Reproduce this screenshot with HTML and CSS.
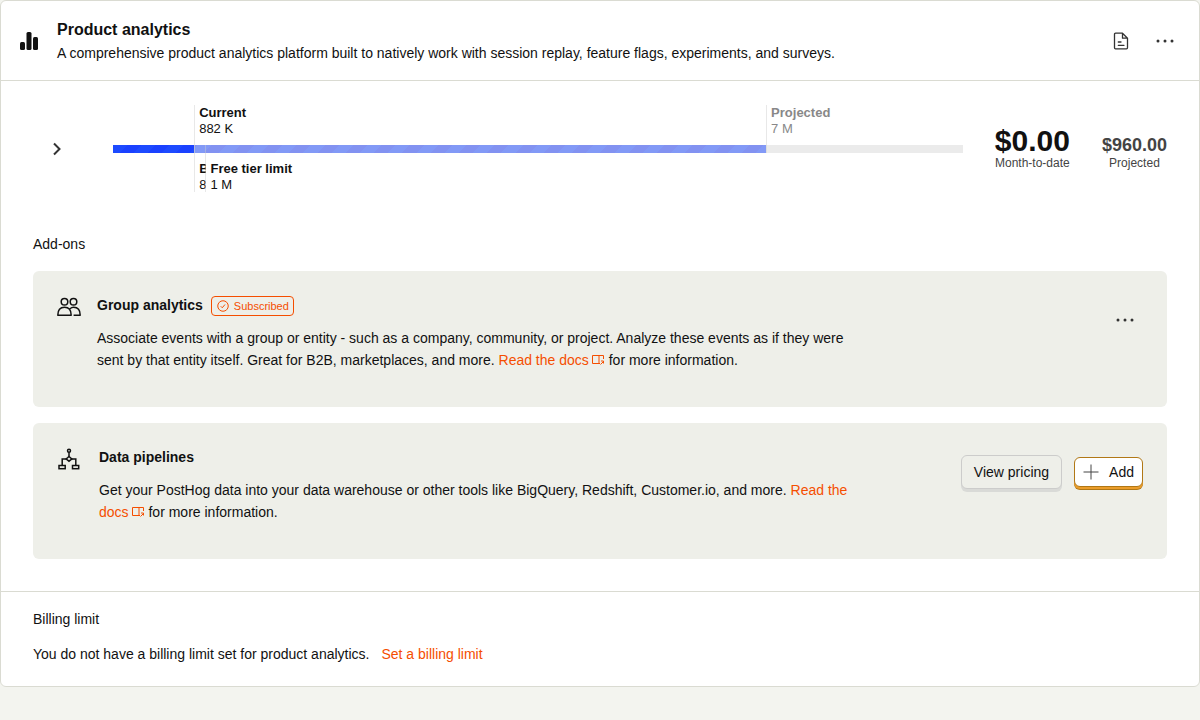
FILE: index.html
```html
<!DOCTYPE html>
<html lang="en">
<head>
<meta charset="utf-8">
<meta name="viewport" content="width=device-width, initial-scale=1">
<title>Product analytics billing</title>
<link rel="stylesheet" href="styles.css">
</head>
<body>
<main class="product">
  <header class="product-header">
    <svg class="product-icon" viewBox="0 0 24 24" aria-hidden="true">
      <rect x="3" y="13" width="5" height="8" rx="1.5"/><rect x="9.500" y="3" width="5" height="18" rx="1.5"/><rect x="16" y="8" width="5" height="13" rx="1.5"/>
    </svg>
    <div class="product-heading">
      <h1 class="product-title">Product analytics</h1>
      <p class="product-summary">A comprehensive product analytics platform built to natively work with session replay, feature flags, experiments, and surveys.</p>
    </div>
    <div class="header-actions">
      <a class="icon-button" href="#docs" aria-label="Read the docs">
        <svg class="icon" viewBox="0 0 20 20" fill="none" stroke="currentColor" stroke-width="1.3" stroke-linejoin="round" stroke-linecap="round"><path d="M11.500 2.200H4.500a1 1 0 0 0-1 1v13.600a1 1 0 0 0 1 1h11a1 1 0 0 0 1-1V7.200zM11.500 2.200v5h5M7.300 11h2.700M7.300 14.300h5.700"/></svg>
      </a>
      <button class="icon-button" type="button" aria-label="More options">
        <svg class="icon" viewBox="0 0 20 20" fill="currentColor"><circle cx="3" cy="10" r="1.5"/><circle cx="10" cy="10" r="1.5"/><circle cx="17" cy="10" r="1.5"/></svg>
      </button>
    </div>
  </header>

  <section class="product-body">
    <div class="usage">
      <button class="expand" type="button" aria-label="Show breakdown">
        <svg class="icon-large" viewBox="0 0 24 24" fill="none" stroke="currentColor" stroke-width="2"><path d="M9 6.500l5.500 5.500L9 17.500"/></svg>
      </button>
      <div class="gauge">
        <div class="gauge-fill gauge-projected" style="width: 76.850%"></div>
        <div class="gauge-fill gauge-current" style="width: 9.550%"></div>
        <div class="marker marker-below" style="left: 9.550%"><b>Billing limit</b><span>882 K</span></div>
        <div class="marker marker-below marker-cover" style="left: 10.880%"><b>Free tier limit</b><span>1 M</span></div>
        <div class="marker marker-above" style="left: 9.550%"><b>Current</b><span>882 K</span></div>
        <div class="marker marker-above marker-muted" style="left: 76.850%"><b>Projected</b><span>7 M</span></div>
      </div>
      <div class="totals">
        <div class="total"><span class="amount">$0.00</span><span class="total-label">Month-to-date</span></div>
        <div class="total total-projected"><span class="amount amount-small">$960.00</span><span class="total-label">Projected</span></div>
      </div>
    </div>

    <h2 class="section-title">Add-ons</h2>
    <div class="addons">
      <article class="addon">
        <svg class="icon-large" viewBox="0 0 24 24" fill="none" stroke="currentColor" stroke-width="1.5" stroke-linejoin="round"><circle cx="7.500" cy="6.800" r="3.300"/><circle cx="16.500" cy="6.800" r="3.300"/><path d="M.8 20.250c0-4.800 2.200-8 6.700-8s6.700 3.200 6.700 8zM13 13.700c1-.9 2.200-1.400 3.600-1.400 4.500 0 6.600 3.200 6.600 7.950h-6.600"/></svg>
        <div class="addon-text">
          <div class="addon-heading">
            <h3 class="addon-title">Group analytics</h3>
            <span class="badge"><svg class="badge-icon" viewBox="0 0 24 24" fill="none" stroke="currentColor" stroke-width="2"><circle cx="12" cy="12" r="10.500"/><path d="M7.500 12.500l3 3L16 9"/></svg>Subscribed</span>
          </div>
          <p class="addon-description">Associate events with a group or entity - such as a company, community, or project. Analyze these events as if they were sent by that entity itself. Great for B2B, marketplaces, and more. <a class="link" href="#group-docs">Read the docs<svg class="docs-icon" viewBox="0 0 14 12" fill="none" stroke="currentColor" aria-hidden="true"><path d="M9 9.500H1.500v-8h11V5M8 1.500v8M9.500 10.500l3-3M10 7h2.500v2.500"/></svg></a> for more information.</p>
        </div>
        <div class="addon-actions">
          <button class="icon-button" type="button" aria-label="More add-on options">
            <svg class="icon" viewBox="0 0 20 20" fill="currentColor"><circle cx="3" cy="10" r="1.5"/><circle cx="10" cy="10" r="1.5"/><circle cx="17" cy="10" r="1.5"/></svg>
          </button>
        </div>
      </article>

      <article class="addon addon-wide-gap">
        <svg class="icon-large" viewBox="0 0 24 24" fill="none" stroke="currentColor" stroke-width="1.500"><circle cx="12" cy="3.700" r="1.500"/><path d="M12 5.200v4.300M9.700 12H5.200v6M14.300 12h4.500v6"/><path d="M12 9.500l2.800 2.500-2.800 2.200L9.200 12z"/><rect x="2" y="18.500" width="6.200" height="3.200"/><rect x="15.500" y="18.500" width="6.200" height="3.200"/></svg>
        <div class="addon-text">
          <div class="addon-heading"><h3 class="addon-title">Data pipelines</h3></div>
          <p class="addon-description">Get your PostHog data into your data warehouse or other tools like BigQuery, Redshift, Customer.io, and more. <a class="link" href="#pipeline-docs">Read the docs<svg class="docs-icon" viewBox="0 0 14 12" fill="none" stroke="currentColor" aria-hidden="true"><path d="M9 9.500H1.500v-8h11V5M8 1.500v8M9.500 10.500l3-3M10 7h2.500v2.500"/></svg></a> for more information.</p>
        </div>
        <div class="addon-actions">
          <button class="button" type="button">View pricing</button>
          <button class="button button-primary" type="button"><svg class="plus" viewBox="0 0 16 16" fill="none" stroke="currentColor" aria-hidden="true"><path d="M8 .5v15M.5 8h15"/></svg>Add</button>
        </div>
      </article>
    </div>
  </section>

  <footer class="limit">
    <h2 class="section-title">Billing limit</h2>
    <p class="limit-text"><span>You do not have a billing limit set for product analytics.</span><a class="link" href="#limit">Set a billing limit</a></p>
  </footer>
</main>
</body>
</html>
```

FILE: styles.css
```css
* { box-sizing: border-box; }
body {
  margin: 0;
  background: #f3f4ef;
  color: #111;
  font: 14px/20px "Liberation Sans", Arial, sans-serif;
}
h1, h2, h3, p { margin: 0; }
svg { display: block; flex: none; }
button { font: inherit; color: inherit; cursor: pointer; }

.product { background: #fff; border: 1px solid #dadbd2; border-radius: 6px; }
.product-header {
  display: flex;
  align-items: center;
  gap: 16px;
  padding: 16px 16px 15px;
  border-bottom: 1px solid #dadbd2;
}
.product-icon { width: 24px; height: 24px; fill: #111; }
.product-heading { flex: 1; padding-top: 1px; }
.product-title { font-size: 16px; line-height: 24px; }
.product-summary { line-height: 23px; }
.header-actions { display: flex; gap: 8px; }

.icon-button {
  display: flex;
  align-items: center;
  justify-content: center;
  width: 36px;
  height: 34px;
  padding: 0;
  border: 0;
  background: none;
  color: #333;
}
.icon { width: 20px; height: 20px; }
.icon-large { width: 24px; height: 24px; }

.product-body { padding: 0 32px 32px; }
.usage { display: flex; align-items: center; gap: 32px; height: 136px; }
.expand {
  display: flex;
  justify-content: center;
  width: 48px;
  padding: 8px 0;
  border: 0;
  background: none;
  color: #333;
}
.gauge { position: relative; flex: 1; height: 8px; background: #ebebeb; }
.gauge-fill { position: absolute; top: 0; left: 0; height: 100%; }
.gauge-projected { background: repeating-linear-gradient(135deg, #8299f6 0 10px, #8292f1 10px 20px); }
.gauge-current { background: repeating-linear-gradient(135deg, #1d4aff 0 10px, #1a41ff 10px 20px); }
.marker {
  position: absolute;
  display: flex;
  flex-direction: column;
  padding-left: 4px;
  border-left: 1px solid rgba(205, 205, 205, 0.45);
  font-size: 13px;
  line-height: 16px;
  white-space: nowrap;
}
.marker-above { bottom: 0; height: 48px; }
.marker-below { top: 0; height: 47px; padding-top: 16px; }
.marker-cover::before {
  content: "";
  position: absolute;
  inset: 8px 0 0;
  background: #fff;
  z-index: -1;
}
.marker-cover { z-index: 0; }
.marker-muted { color: #888; }

.totals { display: flex; align-items: flex-end; gap: 32px; }
.total { display: flex; flex-direction: column; align-items: center; }
.total-projected, .total-label { color: #444; }
.amount { font-size: 30px; line-height: 30px; font-weight: bold; }
.amount-small { font-size: 18px; line-height: 22px; }
.total-label { padding-bottom: 1px; font-size: 12px; line-height: 15px; }

.section-title { font-size: 14px; font-weight: normal; }
.product-body .section-title { margin: 17px 0; }
.addons { display: grid; gap: 16px; }
.addon {
  display: flex;
  align-items: flex-start;
  gap: 16px;
  min-height: 136px;
  padding: 24px;
  border-radius: 6px;
  background: #eeefe9;
}
.addon-wide-gap { gap: 18px; }
.addon-text { flex: 0 1 768px; }
.addon-heading { display: flex; align-items: center; gap: 8px; min-height: 22px; }
.addon-title { padding-bottom: 2px; font-size: 14px; }
.badge {
  display: flex;
  align-items: center;
  gap: 5px;
  padding: 0 4px 0 5px;
  border: 1px solid #f54e00;
  border-radius: 4px;
  color: #f54e00;
  font-size: 11px;
  line-height: 18px;
}
.badge-icon { width: 12px; height: 12px; }
.addon-description { margin-top: 10px; line-height: 22px; }
.link { color: #f54e00; text-decoration: none; }
.docs-icon { display: inline-block; width: 14px; height: 12px; margin-left: 2px; vertical-align: -1px; }
.addon-actions { display: flex; align-items: center; gap: 12px; margin: 8px 0 0 auto; }

.button {
  display: flex;
  align-items: center;
  gap: 10px;
  height: 34px;
  margin-bottom: 3px;
  padding: 0 12px;
  border: 1px solid #cccccb;
  border-radius: 6px;
  background: #eeefe9;
  box-shadow: 0 3px 0 #d9dad7;
  white-space: nowrap;
}
.button-primary {
  height: 30px;
  padding: 0 8px;
  border-color: #b17816;
  background: #fff;
  box-shadow: 0 2px 0 #eb9d2a, 0 3px 0 #b17816;
}
.plus { width: 16px; height: 16px; color: #444; }

.limit { padding: 17px 32px 22px; border-top: 1px solid #dadbd2; }
.limit-text { display: flex; gap: 12px; margin-top: 15px; }
```
